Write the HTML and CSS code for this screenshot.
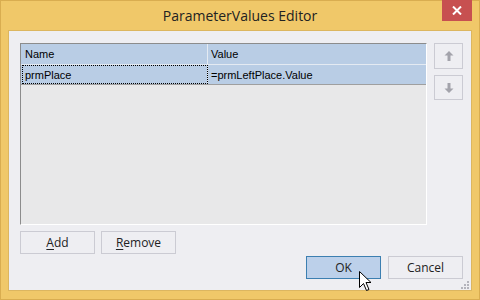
FILE: index.html
```html
<!doctype html>
<html lang="en">
  <head>
    <meta charset="UTF-8" />
    <title>ParameterValues Editor</title>
    <link rel="stylesheet" href="styles.css">
  </head>
  <body>
    <div class="window">
      <div class="titlebar">ParameterValues Editor</div>
      <div class="close">
        <svg width="10" height="9" viewBox="0 0 10 9">
          <path d="M1 0.5 L9 8.5 M9 0.5 L1 8.5" stroke="#fff" stroke-width="2" />
        </svg>
      </div>

      <div class="client">
        <div class="top">
          <div class="grid">
            <div class="grid-head">
              <div class="cell name">Name</div>
              <div class="cell">Value</div>
            </div>
            <div class="grid-row">
              <div class="cell name focus">prmPlace</div>
              <div class="cell">=prmLeftPlace.Value</div>
            </div>
          </div>
          <div class="side">
            <button class="btn side-btn">
              <svg width="10" height="10" viewBox="0 0 10 10">
                <path d="M5 0 L9.5 4.5 L6.5 4.5 L6.5 10 L3.5 10 L3.5 4.5 L0.5 4.5 Z" fill="#a3a3ab" />
              </svg>
            </button>
            <button class="btn side-btn down">
              <svg width="10" height="10" viewBox="0 0 10 10">
                <path d="M5 10 L9.5 5.5 L6.5 5.5 L6.5 0 L3.5 0 L3.5 5.5 L0.5 5.5 Z" fill="#a3a3ab" />
              </svg>
            </button>
          </div>
        </div>

        <div class="actions">
          <button class="btn"><u>A</u>dd</button>
          <button class="btn"><u>R</u>emove</button>
        </div>

        <div class="footer">
          <button class="btn default">OK</button>
          <button class="btn">Cancel</button>
        </div>

        <svg class="grip" width="9" height="9" viewBox="0 0 9 9">
          <rect x="6" y="0" width="2" height="2" fill="#b4b4bc" />
          <rect x="3" y="3" width="2" height="2" fill="#b4b4bc" />
          <rect x="6" y="3" width="2" height="2" fill="#b4b4bc" />
          <rect x="0" y="6" width="2" height="2" fill="#b4b4bc" />
          <rect x="3" y="6" width="2" height="2" fill="#b4b4bc" />
          <rect x="6" y="6" width="2" height="2" fill="#b4b4bc" />
        </svg>
      </div>

      <!-- mouse pointer over the OK button -->
      <svg class="cursor" width="13" height="21" viewBox="0 0 13 21">
        <path d="M0.5 0.5 L0.5 16.5 L4.5 12.5 L7.5 19.5 L10 18.5 L7 11.5 L12 11.5 Z"
              fill="#fff" stroke="#000" stroke-width="1" stroke-linejoin="round" />
      </svg>
    </div>
  </body>
</html>
```

FILE: styles.css
```css
body {
  margin: 0;
  font-family: 'Open Sans', 'Noto Sans', sans-serif;
}
.window {
  position: relative;
  width: 480px;
  height: 300px;
  box-sizing: border-box;
  border: 1px solid #d9ad50;
  background: #f0c869;
  display: flex;
  flex-direction: column;
}
.titlebar {
  height: 29px;
  line-height: 29px;
  text-align: center;
  font-size: 14px;
  color: #222;
}
.close {
  position: absolute;
  top: -1px;
  right: 7px;
  width: 30px;
  height: 21px;
  background: #c75050;
  display: flex;
  align-items: center;
  justify-content: center;
}
.close svg {
  display: block;
}
.client {
  position: relative;
  flex: 1;
  margin: 0 7px 8px 7px;
  border: 1px solid #dcb660;
  background: #eeeef2;
  padding: 12px 8px 11px 11px;
  display: flex;
  flex-direction: column;
}
.top {
  flex: 1;
  display: flex;
  gap: 7px;
}
.grid {
  flex: 1;
  border: 1px solid;
  border-color: #8c8c8c #ffffff #ffffff #8c8c8c;
  background: #e8e8e9;
  font-family: 'Liberation Sans', Arial, sans-serif;
  font-size: 11px;
  color: #000;
}
.grid-head,
.grid-row {
  display: grid;
  grid-template-columns: 187px 1fr;
  background: #b9cde5;
}
.grid-head {
  height: 20px;
  border-bottom: 1px solid #e4eaf2;
}
.grid-row {
  height: 19px;
  border-bottom: 1px solid #9f9f9f;
}
.cell {
  padding-left: 3px;
  display: flex;
  align-items: center;
}
.name {
  border-right: 1px solid #e4eaf2;
  padding-left: 4px;
}
.focus {
  outline: 1px dotted #000;
  outline-offset: -1px;
  margin-left: 1px;
  padding-left: 3px;
}
.side {
  display: flex;
  flex-direction: column;
  gap: 6px;
}
.btn {
  box-sizing: border-box;
  width: 75px;
  height: 23px;
  padding: 0;
  border: 1px solid #cbcbd3;
  background: #eeeef2;
  font-family: 'Open Sans', 'Noto Sans', sans-serif;
  font-size: 12px;
  color: #222;
}
.btn u {
  text-underline-offset: 2px;
}
.side-btn {
  width: 29px;
  height: 26px;
  display: flex;
  align-items: center;
  justify-content: center;
}
.side-btn.down {
  height: 25px;
}
.actions {
  display: flex;
  gap: 6px;
  margin-top: 6px;
}
.footer {
  display: flex;
  justify-content: flex-end;
  gap: 7px;
  margin-top: 2px;
}
.default {
  border-color: #3c7fb1;
  background: #bcd0ea;
}
.grip {
  position: absolute;
  right: 1px;
  bottom: 0px;
}
.cursor {
  position: absolute;
  left: 358px;
  top: 270px;
}
```
